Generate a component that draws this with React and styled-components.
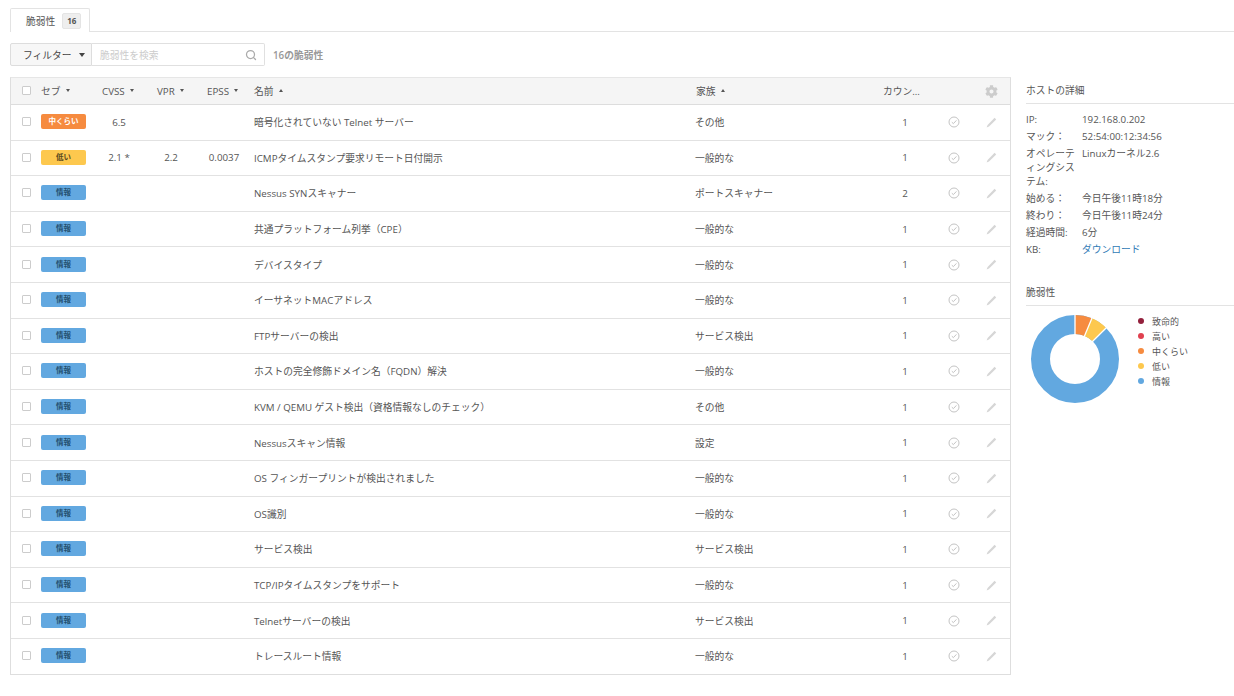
import React from 'react';
import styled, { createGlobalStyle } from 'styled-components';
import { Search } from 'lucide-react';
import { FaCog } from 'react-icons/fa';

const GlobalStyle = createGlobalStyle`
  html, body { margin: 0; padding: 0; background: #fff; }
  body {
    font-family: "Open Sans", "Noto Sans CJK JP", sans-serif;
    font-size: 9.75px;
    color: #555;
  }
`;

const COLS = '30px 54px 48px 56px 50px 446px 185px 50px 48px 26px 1fr';

const Page = styled.div`
  width: 1234px;
  height: 696px;
  overflow: hidden;
  padding: 8px 0 0 10px;
  box-sizing: border-box;
`;
const Tabs = styled.div`
  display: flex;
  height: 23px;
  border-bottom: 1px solid #e3e3e3;
`;
const Tab = styled.div`
  display: flex;
  align-items: center;
  gap: 7px;
  height: 24px;
  padding: 0 8px 0 15px;
  border: 1px solid #e3e3e3;
  border-bottom: none;
  border-radius: 2px 2px 0 0;
  background: #fff;
  box-sizing: border-box;
`;
const TabCount = styled.span`
  background: #eee;
  border: 1px solid #e4e4e4;
  border-radius: 2px;
  padding: 0 4px;
  height: 14px;
  line-height: 14px;
  font-size: 8px;
  font-weight: 700;
`;
const Toolbar = styled.div`
  display: flex;
  align-items: center;
  margin-top: 11px;
  height: 23px;
`;
const FilterButton = styled.div`
  display: flex;
  align-items: center;
  justify-content: space-between;
  width: 82px;
  height: 23px;
  box-sizing: border-box;
  padding: 0 6px 0 12px;
  background: #f7f7f7;
  border: 1px solid #ddd;
  border-radius: 2px 0 0 2px;
  color: #444;
`;
const SearchBox = styled.div`
  display: flex;
  align-items: center;
  justify-content: space-between;
  width: 173px;
  height: 23px;
  box-sizing: border-box;
  padding: 0 7px 0 8px;
  border: 1px solid #e0e0e0;
  border-left: none;
  border-radius: 0 2px 2px 0;
  color: #ccc;
`;
const ResultCount = styled.div`
  margin-left: 8px;
  color: #999;
  font-weight: 600;
`;
const Main = styled.div`
  display: flex;
  margin-top: 11px;
  align-items: flex-start;
`;
const Table = styled.div`
  width: 1001px;
  box-sizing: border-box;
  border: 1px solid #dedede;
  border-top-color: #e6e6e6;
`;
const HeadRow = styled.div`
  display: grid;
  grid-template-columns: ${COLS};
  align-items: center;
  height: 26px;
  background: #f5f5f5;
  border-bottom: 1px solid #ddd;
`;
const BodyRow = styled.div`
  display: grid;
  grid-template-columns: ${COLS};
  align-items: center;
  height: 35.6px;
  box-sizing: border-box;
  border-bottom: 1px solid #e2e2e2;
  &:last-child { border-bottom: none; height: 35px; }
`;
const HeadCell = styled.div`
  display: flex;
  align-items: center;
  gap: 5px;
  padding-left: ${(p) => p.$pad || 0}px;
  white-space: nowrap;
`;
const Cell = styled.div`
  text-align: ${(p) => p.$align || 'left'};
  padding-left: ${(p) => p.$pad || 0}px;
  white-space: nowrap;
`;
const IconCell = styled.div`
  display: flex;
  justify-content: center;
  align-items: center;
`;
const Box = styled.span`
  display: block;
  box-sizing: border-box;
  width: 9px;
  height: 9px;
  margin: -1px 0 0 11px;
  background: #fff;
  border: 1px solid #ccc;
  border-radius: 1px;
`;
const Caret = styled.span`
  width: 0;
  height: 0;
  border-left: 2px solid transparent;
  border-right: 2px solid transparent;
  ${(p) => (p.$up ? 'border-bottom: 3px solid #555;' : 'border-top: 3px solid #555;')}
  margin-top: -2px;
`;
const FilterCaret = styled.span`
  width: 0;
  height: 0;
  border-left: 3.5px solid transparent;
  border-right: 3.5px solid transparent;
  border-top: 4px solid #444;
`;
const Badge = styled.span`
  display: block;
  width: 45px;
  height: 15px;
  line-height: 14px;
  margin-top: -1px;
  border-radius: 2px;
  text-align: center;
  font-size: 7.5px;
  font-weight: 600;
  color: ${(p) => p.$fg};
  background: ${(p) => p.$bg};
`;
const Side = styled.aside`
  width: 208px;
  margin-left: 15px;
`;
const SideTitle = styled.div`
  height: 27px;
  line-height: 27px;
  box-sizing: border-box;
  border-bottom: 1px solid #e3e3e3;
`;
const Details = styled.div`
  margin-top: 9px;
`;
const DetailRow = styled.div`
  display: grid;
  grid-template-columns: 56px 1fr;
  line-height: 13.6px;
  margin-bottom: 3.6px;
`;
const Link = styled.a`
  color: #2f7ab5;
  text-decoration: none;
`;
const VulnSection = styled.div`
  margin-top: 22px;
`;
const ChartRow = styled.div`
  display: flex;
  margin: 3px 0 0 -1px;
`;
const Legend = styled.ul`
  list-style: none;
  margin: 5px 0 0 13px;
  padding: 0;
`;
const LegendItem = styled.li`
  display: flex;
  align-items: center;
  gap: 8px;
  height: 15px;
  font-size: 9px;
  &::before {
    content: '';
    width: 6px;
    height: 6px;
    border-radius: 50%;
    background: ${(p) => p.$color};
  }
`;

const SEV = {
  medium: { label: '中くらい', bg: '#f68b3f', fg: '#fff' },
  low: { label: '低い', bg: '#fdc84e', fg: '#5a4a20' },
  info: { label: '情報', bg: '#62a8e0', fg: '#24506f' },
};

const rows = [
  ['medium', '6.5', '', '', '暗号化されていない Telnet サーバー', 'その他', 1],
  ['low', '2.1 *', '2.2', '0.0037', 'ICMPタイムスタンプ要求リモート日付開示', '一般的な', 1],
  ['info', '', '', '', 'Nessus SYNスキャナー', 'ポートスキャナー', 2],
  ['info', '', '', '', '共通プラットフォーム列挙（CPE）', '一般的な', 1],
  ['info', '', '', '', 'デバイスタイプ', '一般的な', 1],
  ['info', '', '', '', 'イーサネットMACアドレス', '一般的な', 1],
  ['info', '', '', '', 'FTPサーバーの検出', 'サービス検出', 1],
  ['info', '', '', '', 'ホストの完全修飾ドメイン名（FQDN）解決', '一般的な', 1],
  ['info', '', '', '', 'KVM / QEMU ゲスト検出（資格情報なしのチェック）', 'その他', 1],
  ['info', '', '', '', 'Nessusスキャン情報', '設定', 1],
  ['info', '', '', '', 'OS フィンガープリントが検出されました', '一般的な', 1],
  ['info', '', '', '', 'OS識別', '一般的な', 1],
  ['info', '', '', '', 'サービス検出', 'サービス検出', 1],
  ['info', '', '', '', 'TCP/IPタイムスタンプをサポート', '一般的な', 1],
  ['info', '', '', '', 'Telnetサーバーの検出', 'サービス検出', 1],
  ['info', '', '', '', 'トレースルート情報', '一般的な', 1],
];

const details = [
  ['IP:', '192.168.0.202'],
  ['マック：', '52:54:00:12:34:56'],
  ['オペレーティングシステム:', 'Linuxカーネル2.6'],
  ['始める：', '今日午後11時18分'],
  ['終わり：', '今日午後11時24分'],
  ['経過時間:', '6分'],
];

const legend = [
  ['致命的', '#93203c'],
  ['高い', '#e0404f'],
  ['中くらい', '#f68b3f'],
  ['低い', '#fdc84e'],
  ['情報', '#62a8e0'],
];

const CheckIcon = () => (
  <svg width="12" height="12" viewBox="0 0 12 12" fill="none" stroke="#c4c4c4" strokeWidth="1">
    <circle cx="6" cy="6" r="5" />
    <path d="M3.8 6.2 5.4 7.6 8.4 4.4" />
  </svg>
);

const PencilIcon = () => (
  <svg width="11" height="11" viewBox="0 0 11 11">
    <path d="M8.6.8 10.2 2.4 3 9.4.6 10.4 1.6 8Z" fill="#d6d6d6" />
  </svg>
);

// 16 findings: 1 medium, 1 low, the rest info
const Donut = () => {
  const r = 34.5;
  const c = 2 * Math.PI * r;
  const seg = c / 16;
  const gap = (deg) => {
    const a = ((deg - 90) * Math.PI) / 180;
    return `M${50 + 24 * Math.cos(a)} ${50 + 24 * Math.sin(a)}L${50 + 45 * Math.cos(a)} ${50 + 45 * Math.sin(a)}`;
  };
  return (
    <svg width="100" height="100" viewBox="0 0 100 100" style={{ flex: 'none' }}>
      <g fill="none" strokeWidth="19" transform="rotate(-90 50 50)">
        <circle cx="50" cy="50" r={r} stroke="#62a8e0" />
        <circle cx="50" cy="50" r={r} stroke="#f68b3f" strokeDasharray={`${seg} ${c - seg}`} />
        <circle cx="50" cy="50" r={r} stroke="#fdc84e" strokeDasharray={`${seg} ${c - seg}`} strokeDashoffset={-seg} />
      </g>
      <path d={`${gap(0)}${gap(22.5)}${gap(45)}`} stroke="#fff" strokeWidth="1.3" />
    </svg>
  );
};

export default function App() {
  return (
    <Page>
      <GlobalStyle />
      <Tabs>
        <Tab>
          脆弱性 <TabCount>16</TabCount>
        </Tab>
      </Tabs>
      <Toolbar>
        <FilterButton>
          フィルター <FilterCaret />
        </FilterButton>
        <SearchBox>
          脆弱性を検索
          <Search size={12} color="#aaa" strokeWidth={2.5} />
        </SearchBox>
        <ResultCount>16の脆弱性</ResultCount>
      </Toolbar>
      <Main>
        <Table>
          <HeadRow>
            <Box />
            <HeadCell>セブ <Caret /></HeadCell>
            <HeadCell $pad={7}>CVSS <Caret /></HeadCell>
            <HeadCell $pad={14}>VPR <Caret /></HeadCell>
            <HeadCell $pad={8}>EPSS <Caret /></HeadCell>
            <HeadCell $pad={5}>名前 <Caret $up /></HeadCell>
            <HeadCell $pad={1}>家族 <Caret $up /></HeadCell>
            <HeadCell $pad={3}>カウン...</HeadCell>
            <span />
            <IconCell><FaCog size={13} color="#ccc" /></IconCell>
            <span />
          </HeadRow>
          {rows.map(([sev, cvss, vpr, epss, name, family, count]) => (
            <BodyRow key={name}>
              <Box />
              <Badge $bg={SEV[sev].bg} $fg={SEV[sev].fg}>{SEV[sev].label}</Badge>
              <Cell $align="center">{cvss}</Cell>
              <Cell $align="center">{vpr}</Cell>
              <Cell $align="center">{epss}</Cell>
              <Cell $pad={5}>{name}</Cell>
              <Cell>{family}</Cell>
              <Cell $align="center">{count}</Cell>
              <IconCell><CheckIcon /></IconCell>
              <IconCell><PencilIcon /></IconCell>
              <span />
            </BodyRow>
          ))}
        </Table>
        <Side>
          <SideTitle>ホストの詳細</SideTitle>
          <Details>
            {details.map(([label, value]) => (
              <DetailRow key={label}>
                <span>{label}</span>
                <span>{value}</span>
              </DetailRow>
            ))}
            <DetailRow>
              <span>KB:</span>
              <Link href="#">ダウンロード</Link>
            </DetailRow>
          </Details>
          <VulnSection>
            <SideTitle>脆弱性</SideTitle>
            <ChartRow>
              <Donut />
              <Legend>
                {legend.map(([label, color]) => (
                  <LegendItem key={label} $color={color}>{label}</LegendItem>
                ))}
              </Legend>
            </ChartRow>
          </VulnSection>
        </Side>
      </Main>
    </Page>
  );
}
